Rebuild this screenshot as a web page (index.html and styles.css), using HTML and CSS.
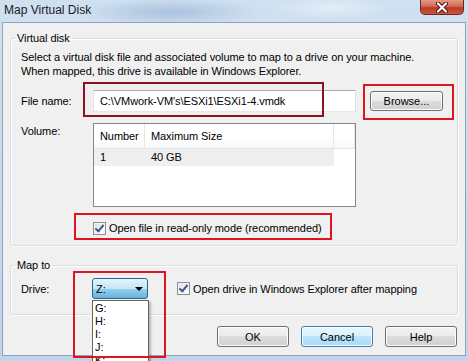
FILE: index.html
```html
<!DOCTYPE html>
<html lang="en">

<head>
    <meta charset="UTF-8">
    <title>Map Virtual Disk</title>
    <link rel="stylesheet" href="styles.css">
</head>

<body>
    <div class="window">
        <div class="titlebar">
            <span class="title">Map Virtual Disk</span>
            <div class="close">
                <svg width="18" height="11" viewBox="0 0 18 11">
                    <path d="M5 1.5 L13 9.5 M13 1.5 L5 9.5" stroke="#4a1010" stroke-width="4" stroke-linecap="round" />
                    <path d="M5 1.5 L13 9.5 M13 1.5 L5 9.5" stroke="#ffffff" stroke-width="2.2" stroke-linecap="round" />
                </svg>
            </div>
        </div>

        <div class="client">
            <fieldset class="group group-disk">
                <legend>Virtual disk</legend>
                <p class="intro">Select a virtual disk file and associated volume to map to a drive on your machine.<br>When mapped, this drive is available in Windows Explorer.</p>

                <div class="row row-file">
                    <span class="field-label">File name:</span>
                    <div class="textbox">C:\VMwork-VM's\ESXi1\ESXi1-4.vmdk</div>
                    <button class="btn btn-browse">Browse...</button>
                </div>

                <div class="row row-volume">
                    <span class="field-label">Volume:</span>
                    <div class="listview">
                        <div class="lv-head">
                            <span class="col-num">Number</span>
                            <span class="col-size">Maximum Size</span>
                            <span class="col-fill"></span>
                        </div>
                        <div class="lv-row">
                            <span class="col-num">1</span>
                            <span class="col-size">40 GB</span>
                        </div>
                    </div>
                </div>

                <div class="row row-check">
                    <span class="check"></span>
                    <span>Open file in read-only mode (recommended)</span>
                </div>
            </fieldset>

            <fieldset class="group group-map">
                <legend>Map to</legend>
                <div class="row row-drive">
                    <span class="field-label drive-label">Drive:</span>
                    <div class="combo">
                        <span>Z:</span>
                        <span class="arrow"></span>
                    </div>
                    <span class="check check-drive"></span>
                    <span>Open drive in Windows Explorer after mapping</span>
                </div>
            </fieldset>

            <div class="buttons">
                <button class="btn">OK</button>
                <button class="btn btn-default">Cancel</button>
                <button class="btn">Help</button>
            </div>
        </div>

        <!-- open combo list -->
        <ul class="droplist">
            <li>G:</li>
            <li>H:</li>
            <li>I:</li>
            <li>J:</li>
            <li>K:</li>
        </ul>

        <!-- annotation boxes -->
        <div class="mark mark-file"></div>
        <div class="mark mark-browse"></div>
        <div class="mark mark-check"></div>
        <div class="mark mark-drive"></div>
    </div>
</body>

</html>
```

FILE: styles.css
```css
body {
    margin: 0;
    overflow: hidden;
    font-family: 'Liberation Sans', Arial, sans-serif;
    font-size: 11px;
    letter-spacing: -0.08px;
    color: #000;
}

.window {
    position: relative;
    width: 468px;
    height: 361px;
    overflow: hidden;
    background:
        radial-gradient(ellipse 90px 14px at 170px 12px, rgba(140, 170, 205, 0.55), transparent),
        radial-gradient(ellipse 60px 12px at 330px 8px, rgba(235, 243, 250, 0.7), transparent),
        linear-gradient(180deg, #cfe0f1 0%, #bfd4ea 100%);
}

.titlebar {
    display: flex;
    justify-content: space-between;
    height: 22px;
}

.title {
    padding: 3px 0 0 4px;
    font-size: 12px;
    line-height: 14px;
    letter-spacing: 0;
    color: #1b1b1b;
}

.close {
    width: 44px;
    height: 15px;
    margin-right: 4px;
    box-sizing: border-box;
    border: 1px solid #6b2a24;
    border-top: none;
    border-radius: 0 0 5px 5px;
    background: linear-gradient(180deg, #e39a86 0%, #d16a54 45%, #bd3a26 55%, #c9563c 100%);
    display: flex;
    align-items: center;
    justify-content: center;
}

.client {
    height: 334px;
    margin: 0 2px;
    box-sizing: border-box;
    border: 1px solid #8fa3ba;
    background: #f0f0f0;
}

.group {
    margin: 0 7px;
    padding: 5px 10px 10px;
    border: 1px solid #d5dfe5;
    border-radius: 3px;
    box-shadow: inset 1px 1px 0 #fff, 1px 1px 0 #fff;
}

.group legend {
    margin-left: -6px;
    padding: 0 2px;
    line-height: 14px;
}

.group-disk {
    margin-top: 8px;
}

.group-map {
    margin-top: 12px;
    padding: 6px 10px 15px;
}

.intro {
    margin: 0;
    line-height: 14px;
}

.row {
    display: flex;
    align-items: center;
    line-height: 14px;
}

.field-label {
    width: 72px;
    flex-shrink: 0;
}

.drive-label {
    width: 71px;
}

.row-file {
    margin-top: 12px;
}

.textbox {
    width: 263px;
    height: 22px;
    box-sizing: border-box;
    padding: 3px 0 0 6px;
    border: 1px solid;
    border-color: #abadb3 #dbdfe6 #e3e9ef #e2e3ea;
    background: #fff;
}

.btn {
    width: 72px;
    height: 21px;
    padding: 0;
    border: 1px solid #707070;
    border-radius: 3px;
    font-family: inherit;
    font-size: 11px;
    color: #000;
    background: linear-gradient(180deg, #f2f2f2 0%, #ebebeb 50%, #dddddd 50%, #cfcfcf 100%);
    box-shadow: inset 0 0 0 1px #fcfcfc;
}

.btn-browse {
    width: 73px;
    height: 20px;
    margin-left: 14px;
}

.btn-default {
    border-color: #3c7fb1;
    background: linear-gradient(180deg, #eaf6fd 0%, #d9f0fc 50%, #bee6fd 50%, #a7d9f5 100%);
}

.row-volume {
    margin-top: 11px;
    align-items: flex-start;
}

.row-volume .field-label {
    padding-top: 1px;
}

.listview {
    width: 263px;
    height: 84px;
    box-sizing: border-box;
    border: 1px solid #828790;
    background: #fff;
}

.lv-head,
.lv-row {
    display: flex;
}

.lv-head {
    height: 24px;
    line-height: 24px;
    border-bottom: 1px solid #e5e5e5;
    background: linear-gradient(180deg, #ffffff 0%, #ffffff 60%, #f7f8fa 100%);
}

.lv-head span {
    border-right: 1px solid #e5e5e5;
}

.col-num {
    width: 51px;
    padding-left: 6px;
    box-sizing: border-box;
}

.col-size {
    width: 189px;
    padding-left: 6px;
    box-sizing: border-box;
}

.col-fill {
    flex: 1;
}

.lv-row {
    width: 240px;
    height: 17px;
    line-height: 17px;
    background: #efefef;
}

.row-check {
    margin-top: 14px;
    padding-left: 72px;
}

.check {
    position: relative;
    width: 13px;
    height: 13px;
    margin-right: 3px;
    box-sizing: border-box;
    border: 1px solid #8e8f8f;
    background: linear-gradient(135deg, #dcdcdc 0%, #f4f4f4 60%, #ffffff 100%);
    box-shadow: inset 0 0 0 1px #f4f4f4;
}

.check::after {
    content: "";
    position: absolute;
    left: 3px;
    top: 0px;
    width: 3px;
    height: 7px;
    border: solid #3d5a94;
    border-width: 0 2px 2px 0;
    transform: rotate(40deg);
}

.check-drive {
    margin-left: 29px;
}

.combo {
    display: flex;
    align-items: center;
    justify-content: space-between;
    width: 56px;
    height: 21px;
    box-sizing: border-box;
    padding: 0 4px 0 3px;
    border: 1px solid #2c628b;
    border-radius: 3px;
    background: linear-gradient(180deg, #e5f4fc 0%, #c4e5f6 50%, #98d1ef 50%, #68b3db 100%);
}

.arrow {
    width: 0;
    height: 0;
    border-left: 4px solid transparent;
    border-right: 4px solid transparent;
    border-top: 4px solid #000;
}

.buttons {
    display: flex;
    justify-content: flex-end;
    gap: 12px;
    margin-top: 11px;
    padding-right: 8px;
}

.droplist {
    position: absolute;
    left: 92px;
    top: 300px;
    width: 57px;
    height: 70px;
    margin: 0;
    padding: 1px 0 0;
    box-sizing: border-box;
    list-style: none;
    border: 1px solid #646464;
    background: #fff;
    box-shadow: 2px 2px 2px rgba(0, 0, 0, 0.25);
}

.droplist li {
    padding-left: 2px;
    line-height: 13px;
}

.mark {
    position: absolute;
    box-sizing: border-box;
    border: 2px solid #e0141e;
}

.mark-file {
    left: 83px;
    top: 82px;
    width: 241px;
    height: 35px;
    border-color: #8a1520;
}

.mark-browse {
    left: 363px;
    top: 84px;
    width: 91px;
    height: 36px;
}

.mark-check {
    left: 74px;
    top: 213px;
    width: 258px;
    height: 27px;
}

.mark-drive {
    left: 73px;
    top: 271px;
    width: 93px;
    height: 87px;
}
```
